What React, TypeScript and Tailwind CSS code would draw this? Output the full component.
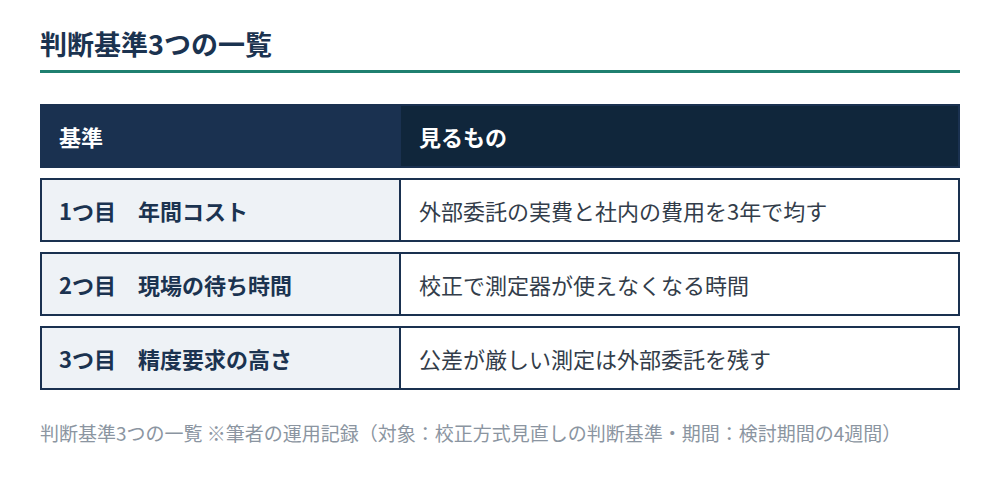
import React from "react";

const rows = [
  { left: "1つ目　年間コスト", right: "外部委託の実費と社内の費用を3年で均す" },
  { left: "2つ目　現場の待ち時間", right: "校正で測定器が使えなくなる時間" },
  { left: "3つ目　精度要求の高さ", right: "公差が厳しい測定は外部委託を残す" },
];

export default function App() {
  return (
    <div
      className="w-[1000px] h-[490px] bg-white px-10 pt-[27px]"
      style={{ fontFamily: '"Noto Sans CJK JP", "Noto Sans", sans-serif' }}
    >
      <h1 className="text-[27px] leading-[33px] font-bold text-[#1b3350]">判断基準3つの一覧</h1>
      <div className="mt-[10px] h-[3px] bg-[#1f8070]" />
      <div className="mt-[31px] flex flex-col gap-[10px]">
        <div className="flex h-[64px] border-2 border-[#1a3150] bg-[#1a3150]">
          <div className="w-[357px] flex items-center pl-[17px] text-[22px] font-bold text-white">基準</div>
          <div className="w-[2px]" />
          <div className="flex-1 flex items-center pl-[18px] bg-[#10263b] text-[22px] font-bold text-white">見るもの</div>
        </div>
        {rows.map((r) => (
          <div key={r.left} className="flex h-[64px] border-2 border-[#1a3150]">
            <div className="w-[357px] flex items-center pl-[17px] bg-[#eef2f6] text-[22px] font-bold text-[#1b3350]">
              {r.left}
            </div>
            <div className="w-[2px] bg-[#1a3150]" />
            <div className="flex-1 flex items-center pl-[18px] bg-white text-[22px] text-[#333d4a]">{r.right}</div>
          </div>
        ))}
      </div>
      <p className="mt-[31px] text-[19px] leading-[24px] text-[#8b95a1] whitespace-nowrap">
        判断基準3つの一覧 ※筆者の運用記録（対象：校正方式見直しの判断基準・期間：検討期間の4週間）
      </p>
    </div>
  );
}
